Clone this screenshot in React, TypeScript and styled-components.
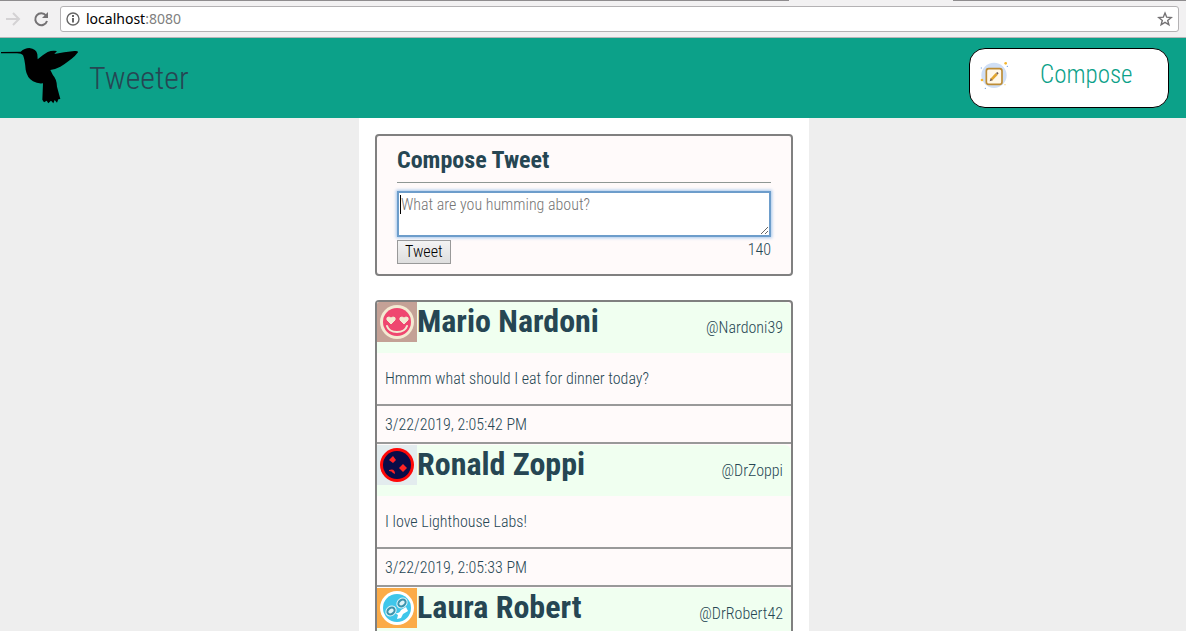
import React from 'react';
import styled, { createGlobalStyle } from 'styled-components';

const GlobalStyle = createGlobalStyle`
  * { box-sizing: border-box; }
  body {
    margin: 0;
    background: #eeeeee;
    color: #264653;
    font-family: "Roboto Condensed", "Liberation Sans Narrow", Roboto, sans-serif;
    font-size: 16px;
    font-weight: 350;
    line-height: 20px;
  }
  h1, h2, h3, p { margin: 0; }
`;

const Page = styled.div`
  height: 100vh;
  display: flex;
  flex-direction: column;
`;

const TabStrip = styled.div`
  flex: none;
  height: 1px;
  display: flex;
  justify-content: flex-end;
  padding-right: 233px;
  background: #8e8c8e;
`;

const ActiveTab = styled.div`
  width: 164px;
  background: #f2f1f2;
`;

const BrowserBar = styled.div`
  flex: none;
  height: 37px;
  display: flex;
  align-items: center;
  gap: 11px;
  padding: 0 7px 0 6px;
  background: #f2f1f2;
  border-bottom: 1px solid #b8b6b8;
`;

const BarButton = styled.button`
  width: 16px;
  height: 16px;
  padding: 0;
  border: 0;
  background: none;
  display: flex;
`;

const AddressBox = styled.div`
  flex: 1;
  height: 26px;
  display: flex;
  align-items: center;
  gap: 6px;
  padding: 0 5px;
  background: #fff;
  border: 1px solid #b4b2b4;
  border-radius: 3px;
`;

const Address = styled.span`
  flex: 1;
  font: 400 14px/20px "Noto Sans", "Open Sans", sans-serif;
  color: #808080;
`;

const Host = styled.span`
  color: #000;
`;

const NavBar = styled.header`
  flex: none;
  height: 80px;
  display: flex;
  align-items: center;
  justify-content: space-between;
  padding-right: 17px;
  background: #0ca189;
`;

const Brand = styled.a`
  display: flex;
  align-items: center;
  gap: 9px;
  color: #264653;
  font-size: 32px;
  line-height: 40px;
  text-decoration: none;
`;

const ComposeButton = styled.button`
  width: 200px;
  height: 60px;
  display: flex;
  align-items: center;
  gap: 31px;
  padding: 0 9px 6px;
  background: #fff;
  border: 1px solid #000;
  border-radius: 16px;
  color: #0ca189;
  font: inherit;
  font-size: 25px;
  line-height: 32px;
`;

const Content = styled.div`
  flex: 1;
  min-height: 0;
  overflow-y: auto;
  scrollbar-width: none;
  padding-right: 18px;
`;

const Container = styled.main`
  max-width: 450px;
  min-height: 100%;
  margin: 0 auto;
  padding: 16px;
  background: #fff;
`;

const ComposeCard = styled.section`
  padding: 10px 20px;
  margin-bottom: 24px;
  background: snow;
  border: 2px solid #808080;
  border-radius: 4px;
`;

const ComposeTitle = styled.h2`
  font-size: 24px;
  line-height: 28px;
  font-weight: 700;
  padding-bottom: 8px;
  border-bottom: 1px solid #8f9794;
  margin-bottom: 8px;
`;

const FieldWrap = styled.div`
  position: relative;
  display: flex;
`;

const Field = styled.textarea`
  width: 100%;
  height: 46px;
  padding: 2px;
  border: 2px solid #6d9dcb;
  outline: 0;
  box-shadow: 0 0 3px 1px #a5c7ec;
  background: #fff;
  font: inherit;
  font-weight: 300;
  resize: vertical;
  &::placeholder { color: #757575; opacity: 1; }
`;

const Caret = styled.span`
  position: absolute;
  left: 3px;
  top: 4px;
  width: 1px;
  height: 19px;
  background: #000;
`;

const ComposeActions = styled.div`
  display: flex;
  justify-content: space-between;
  margin-top: 3px;
`;

const SubmitButton = styled.button`
  height: 24px;
  padding: 0 7px;
  border: 1px solid #999;
  background: linear-gradient(#f3f3f3, #dedede);
  color: #000;
  font: inherit;
`;

const TweetList = styled.section`
  border: 2px solid #808080;
  border-radius: 4px;
  background: snow;
  overflow: hidden;
`;

const TweetCard = styled.article`
  padding-bottom: 1px;
`;

const TweetHeader = styled.header`
  height: 51px;
  display: flex;
  align-items: flex-start;
  padding-right: 8px;
  background: #f0fff0;
  border-top-right-radius: 6px;
`;

const TweetName = styled.h2`
  flex: 1;
  font-size: 32px;
  line-height: 38px;
  font-weight: 700;
`;

const Handle = styled.span`
  padding-top: 16px;
`;

const TweetText = styled.p`
  height: 51px;
  padding: 16px 8px;
`;

const TweetFooter = styled.footer`
  padding: 9px 8px 7px;
  border-top: 2px solid #999;
  border-bottom: 2px solid #999;
`;

const Bird = () => (
  <svg width="80" height="60" viewBox="0 144 240 180" aria-hidden="true">
    <path d="M3 156 L62 155 Q74 144 88 144 Q109 146 112 163 L113 178 Q126 166 143 156 Q157 150 171 153 L163 162 Q192 156 223 153 Q235 152 234 157 Q226 168 215 176 L205 184 Q194 193 181 200 Q168 207 151 210 L159 226 Q170 237 171 260 L181 297 L175 298 L171 308 L164 300 L160 310 L153 302 L145 310 L140 302 L132 307 L127 299 L129 250 Q113 252 99 244 Q81 233 77 209 Q74 176 69 166 Q65 160 51 160 L3 160Z" />
  </svg>
);

const NoteIcon = () => (
  <svg width="30" height="30" viewBox="100 183 90 90" aria-hidden="true">
    <circle cx="145" cy="229" r="38" fill="#cfdff6" />
    <circle cx="180" cy="193" r="4" fill="#f5b731" />
    <circle cx="109" cy="243" r="4" fill="#f5b731" />
    <circle cx="178" cy="257" r="2" fill="#f5cf6d" />
    <circle cx="107" cy="207" r="2" fill="#8bb1e8" />
    <circle cx="119" cy="268" r="2" fill="#6a9be0" />
    <circle cx="185" cy="202" r="2" fill="#6a9be0" />
    <rect x="122" y="209" width="47" height="47" rx="7" fill="#fff8ea" stroke="#bd8c35" strokeWidth="5" />
    <path d="M137 242 L153 225" stroke="#e1a52f" strokeWidth="8" />
    <path d="M132 247 L135 238 L141 244Z M151 222 L155 219 L159 223 L155 227Z" fill="#775f52" />
  </svg>
);

const HeartsAvatar = () => (
  <svg width="40" height="40" viewBox="0 0 40 40" aria-hidden="true">
    <rect width="40" height="40" fill="#c4a196" />
    <circle cx="20" cy="20" r="17" fill="#f3ead2" />
    <circle cx="20" cy="20" r="14" fill="#ef4770" />
    <path d="M14 22 L10 18 Q9 15 12 15 L14 16 L16 15 Q19 15 18 18Z M27 22 L23 18 Q22 15 25 15 L27 16 L29 15 Q32 15 31 18Z" fill="#f3ead2" stroke="#f3ead2" />
    <path d="M10 24 Q12 30 20 30 Q28 30 30 24" fill="none" stroke="#f3ead2" strokeWidth="2" strokeLinecap="round" />
  </svg>
);

const DiamondsAvatar = () => (
  <svg width="40" height="40" viewBox="0 0 40 40" aria-hidden="true">
    <rect width="40" height="40" fill="#e3ecee" />
    <circle cx="20" cy="20" r="17" fill="#ff0808" />
    <circle cx="20" cy="20" r="14" fill="#090c48" />
    <path d="M16 11 L19 15 L16 18 L12 15Z M26 19 L30 23 L26 27 L22 23Z M12 25 Q18 23 18 29 L16 28 Q15 26 12 26Z" fill="#ff2424" />
  </svg>
);

const GogglesAvatar = () => (
  <svg width="40" height="40" viewBox="0 0 40 40" aria-hidden="true">
    <rect width="40" height="40" fill="#fbab48" />
    <circle cx="20" cy="20" r="17" fill="#fff" />
    <circle cx="20" cy="20" r="14" fill="#3fc6ea" />
    <path d="M18 25 Q22 26 24 22 L29 19 L31 23 L26 26 L24 30 L20 31 L21 27Z" fill="#fff" />
    <g fill="#dff4f8">
      <ellipse cx="14" cy="23" rx="6" ry="5" transform="rotate(-38 14 23)" />
      <ellipse cx="25" cy="15" rx="6" ry="5" transform="rotate(-38 25 15)" />
    </g>
    <g fill="#dff4f8" stroke="#3c93ad" strokeWidth="2">
      <ellipse cx="14" cy="23" rx="4" ry="3" transform="rotate(-38 14 23)" />
      <ellipse cx="25" cy="15" rx="4" ry="3" transform="rotate(-38 25 15)" />
    </g>
  </svg>
);

const tweets = [
  { name: 'Mario Nardoni', handle: '@Nardoni39', text: 'Hmmm what should I eat for dinner today?', date: '3/22/2019, 2:05:42 PM', Avatar: HeartsAvatar },
  { name: 'Ronald Zoppi', handle: '@DrZoppi', text: 'I love Lighthouse Labs!', date: '3/22/2019, 2:05:33 PM', Avatar: DiamondsAvatar },
  { name: 'Laura Robert', handle: '@DrRobert42', text: '', date: '', Avatar: GogglesAvatar },
];

export default function App() {
  return (
    <Page>
      <GlobalStyle />
      <TabStrip><ActiveTab /></TabStrip>
      <BrowserBar>
        <BarButton aria-label="Forward">
          <svg width="16" height="16" viewBox="0 0 16 16" fill="none" stroke="#d4d2d4" strokeWidth="2"><path d="M0 8H13M7 2l6 6-6 6" /></svg>
        </BarButton>
        <BarButton aria-label="Reload">
          <svg width="16" height="16" viewBox="0 0 16 16" fill="none" stroke="#747274" strokeWidth="2"><path d="M13 4.500A6 6 0 1 0 14 10" /><path d="M15 1v6H9z" fill="#747274" stroke="none" /></svg>
        </BarButton>
        <AddressBox>
          <svg width="14" height="14" viewBox="0 0 14 14" fill="none" stroke="#666" aria-hidden="true"><circle cx="7" cy="7" r="6" strokeWidth="1.400" /><path d="M7 6v4.500M7 3v2" strokeWidth="2" /></svg>
          <Address><Host>localhost</Host>:8080</Address>
          <BarButton aria-label="Bookmark">
            <svg width="16" height="16" viewBox="0 0 16 16" fill="none" stroke="#747274" strokeWidth="1.400"><path d="M8 2l1.700 4.200 4.500.3-3.500 2.900 1.200 4.400L8 11.400l-3.900 2.400 1.200-4.400-3.500-2.900 4.500-.3z" /></svg>
          </BarButton>
        </AddressBox>
      </BrowserBar>
      <NavBar>
        <Brand href="#"><Bird />Tweeter</Brand>
        <ComposeButton><NoteIcon />Compose</ComposeButton>
      </NavBar>
      <Content>
        <Container>
          <ComposeCard>
            <ComposeTitle>Compose Tweet</ComposeTitle>
            <form>
              <FieldWrap>
                <Field aria-label="Tweet text" placeholder="What are you humming about?" />
                <Caret />
              </FieldWrap>
              <ComposeActions>
                <SubmitButton type="button">Tweet</SubmitButton>
                <span>140</span>
              </ComposeActions>
            </form>
          </ComposeCard>
          <TweetList>
            {tweets.map(({ name, handle, text, date, Avatar }) => (
              <TweetCard key={name}>
                <TweetHeader>
                  <Avatar />
                  <TweetName>{name}</TweetName>
                  <Handle>{handle}</Handle>
                </TweetHeader>
                <TweetText>{text}</TweetText>
                <TweetFooter>{date}</TweetFooter>
              </TweetCard>
            ))}
          </TweetList>
        </Container>
      </Content>
    </Page>
  );
}
